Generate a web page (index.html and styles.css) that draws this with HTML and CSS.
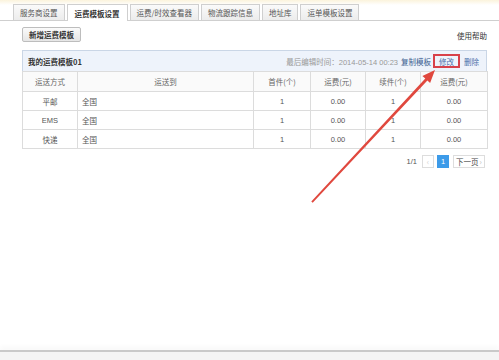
FILE: index.html
```html
<!DOCTYPE html>
<html>
<head>
<meta charset="utf-8">
<link rel="stylesheet" href="styles.css">
</head>
<body>
<div class="tabs">
  <span class="tab">服务商设置</span>
  <span class="tab active">运费模板设置</span>
  <span class="tab">运费/时效查看器</span>
  <span class="tab">物流跟踪信息</span>
  <span class="tab">地址库</span>
  <span class="tab">运单模板设置</span>
</div>
<div class="toolbar">
  <span class="btn">新增运费模板</span>
  <span class="help">使用帮助</span>
</div>
<div class="panel">
  <div class="panel-head">
    <span class="title">我的运费模板01</span>
    <span class="meta">最后编辑时间：<span class="num">2014-05-14 00:23</span></span>
    <span class="copy">复制模板</span>
    <span class="edit">修改</span>
    <span class="del">删除</span>
  </div>
  <table class="grid">
    <colgroup>
      <col class="c1"><col class="c2"><col class="c3"><col class="c4"><col class="c5"><col class="c6">
    </colgroup>
    <tr class="hrow"><th>运送方式</th><th>运送到</th><th>首件(个)</th><th>运费(元)</th><th>续件(个)</th><th>运费(元)</th></tr>
    <tr><td>平邮</td><td class="left">全国</td><td class="num">1</td><td class="num">0.00</td><td class="num">1</td><td class="num">0.00</td></tr>
    <tr><td class="num">EMS</td><td class="left">全国</td><td class="num">1</td><td class="num">0.00</td><td class="num">1</td><td class="num">0.00</td></tr>
    <tr><td>快递</td><td class="left">全国</td><td class="num">1</td><td class="num">0.00</td><td class="num">1</td><td class="num">0.00</td></tr>
  </table>
</div>
<div class="pager">
  <span class="count">1/1</span>
  <span class="pg prev">‹</span>
  <span class="pg cur">1</span>
  <span class="pg next">下一页<span class="chev">›</span></span>
</div>
<div class="spacer"></div>
<div class="footer"></div>
<svg class="arrow" width="499" height="360" viewBox="0 0 499 360">
  <polygon points="311.3,201.5 425.3,78.6 422.4,75.9 435,70 430.1,82.9 427.4,80.5 312.7,202.7" fill="#e0483e"/>
</svg>
</body>
</html>
```

FILE: styles.css
```css
* { box-sizing: border-box; }
html, body { margin: 0; padding: 0; }
body {
  width: 499px;
  height: 360px;
  overflow: hidden;
  display: flex;
  flex-direction: column;
  background: linear-gradient(#fbf3dc 0px, #ffffff 5px);
  font-family: "Noto Sans CJK SC", "Liberation Sans", sans-serif;
  font-size: 7.5px;
  color: #444;
  position: relative;
}
.tabs {
  display: flex;
  gap: 2px;
  padding: 4px 0 0 13px;
  height: 21px;
  border-bottom: 1px solid #cfcfcf;
}
.tab {
  display: flex;
  align-items: center;
  height: 16px;
  padding: 0 6px;
  border: 1px solid #cfcfcf;
  border-bottom: none;
  background: linear-gradient(#fafafa, #ececec);
  color: #555;
  white-space: nowrap;
}
.tab.active {
  background: #fff;
  height: 17px;
  margin-bottom: -1px;
  font-weight: bold;
  color: #333;
  padding: 0 7px;
}
.toolbar {
  display: flex;
  align-items: center;
  justify-content: space-between;
  padding: 6px 12px 0 22px;
}
.btn {
  display: flex;
  align-items: center;
  height: 15px;
  padding: 0 6px;
  border: 1px solid #bdbdbd;
  border-radius: 2px;
  background: linear-gradient(#fafafa, #e6e6e6);
  font-weight: bold;
  color: #333;
}
.help { color: #333; margin-top: 2px; }
.panel {
  margin: 8px 0 0 22px;
  width: 465px;
}
.panel-head {
  display: flex;
  align-items: center;
  height: 21px;
  padding: 0 7px 0 5px;
  background: #eef3fb;
  border: 1px solid #cad6e6;
  border-bottom: none;
}
.title { font-weight: bold; color: #333; flex: 1; }
.meta { color: #999; margin-right: 3px; }
.num { font-family: "Liberation Sans", "Noto Sans CJK SC", sans-serif; }
.copy { color: #3a5d8f; margin-right: 2px; }
.edit {
  color: #4a6ea8;
  border: 2px solid #d8414a;
  padding: 0 4px;
  height: 14px;
  display: flex;
  align-items: center;
  margin-right: 4px;
}
.del { color: #4a6ea8; }
.grid {
  width: 465px;
  border-collapse: collapse;
  table-layout: fixed;
}
.c1 { width: 55px; }
.c2 { width: 176px; }
.c3 { width: 57px; }
.c4 { width: 55px; }
.c5 { width: 55px; }
.c6 { width: 67px; }
.grid th, .grid td {
  border: 1px solid #dcdcdc;
  height: 19px;
  padding: 0;
  text-align: center;
  font-weight: normal;
  color: #555;
}
.grid .hrow th { height: 20px; background: #fafafa; color: #666; }
.grid td.left { text-align: left; padding-left: 4px; }
.pager {
  display: flex;
  align-items: center;
  justify-content: flex-end;
  gap: 3px;
  padding: 6px 14px 0 0;
}
.count { color: #555; margin-right: 2px; font-family: "Liberation Sans", sans-serif; }
.pg {
  display: flex;
  align-items: center;
  justify-content: center;
  height: 13px;
  border: 1px solid #ddd;
  color: #444;
}
.prev { width: 12px; color: #ccc; }
.cur { width: 12px; background: #3d9be9; border-color: #3d9be9; color: #fff; font-family: "Liberation Sans", sans-serif; }
.next { width: 32px; margin-left: 1px; }
.chev { color: #bbb; margin-left: 1px; }
.spacer { flex: 1; }
.footer {
  height: 10px;
  border-top: 2px solid #c9c9c9;
  background: #f4f4f4;
  box-shadow: 0 -4px 4px #fafafa;
}
.arrow { position: absolute; left: 0; top: 0; pointer-events: none; }
```
